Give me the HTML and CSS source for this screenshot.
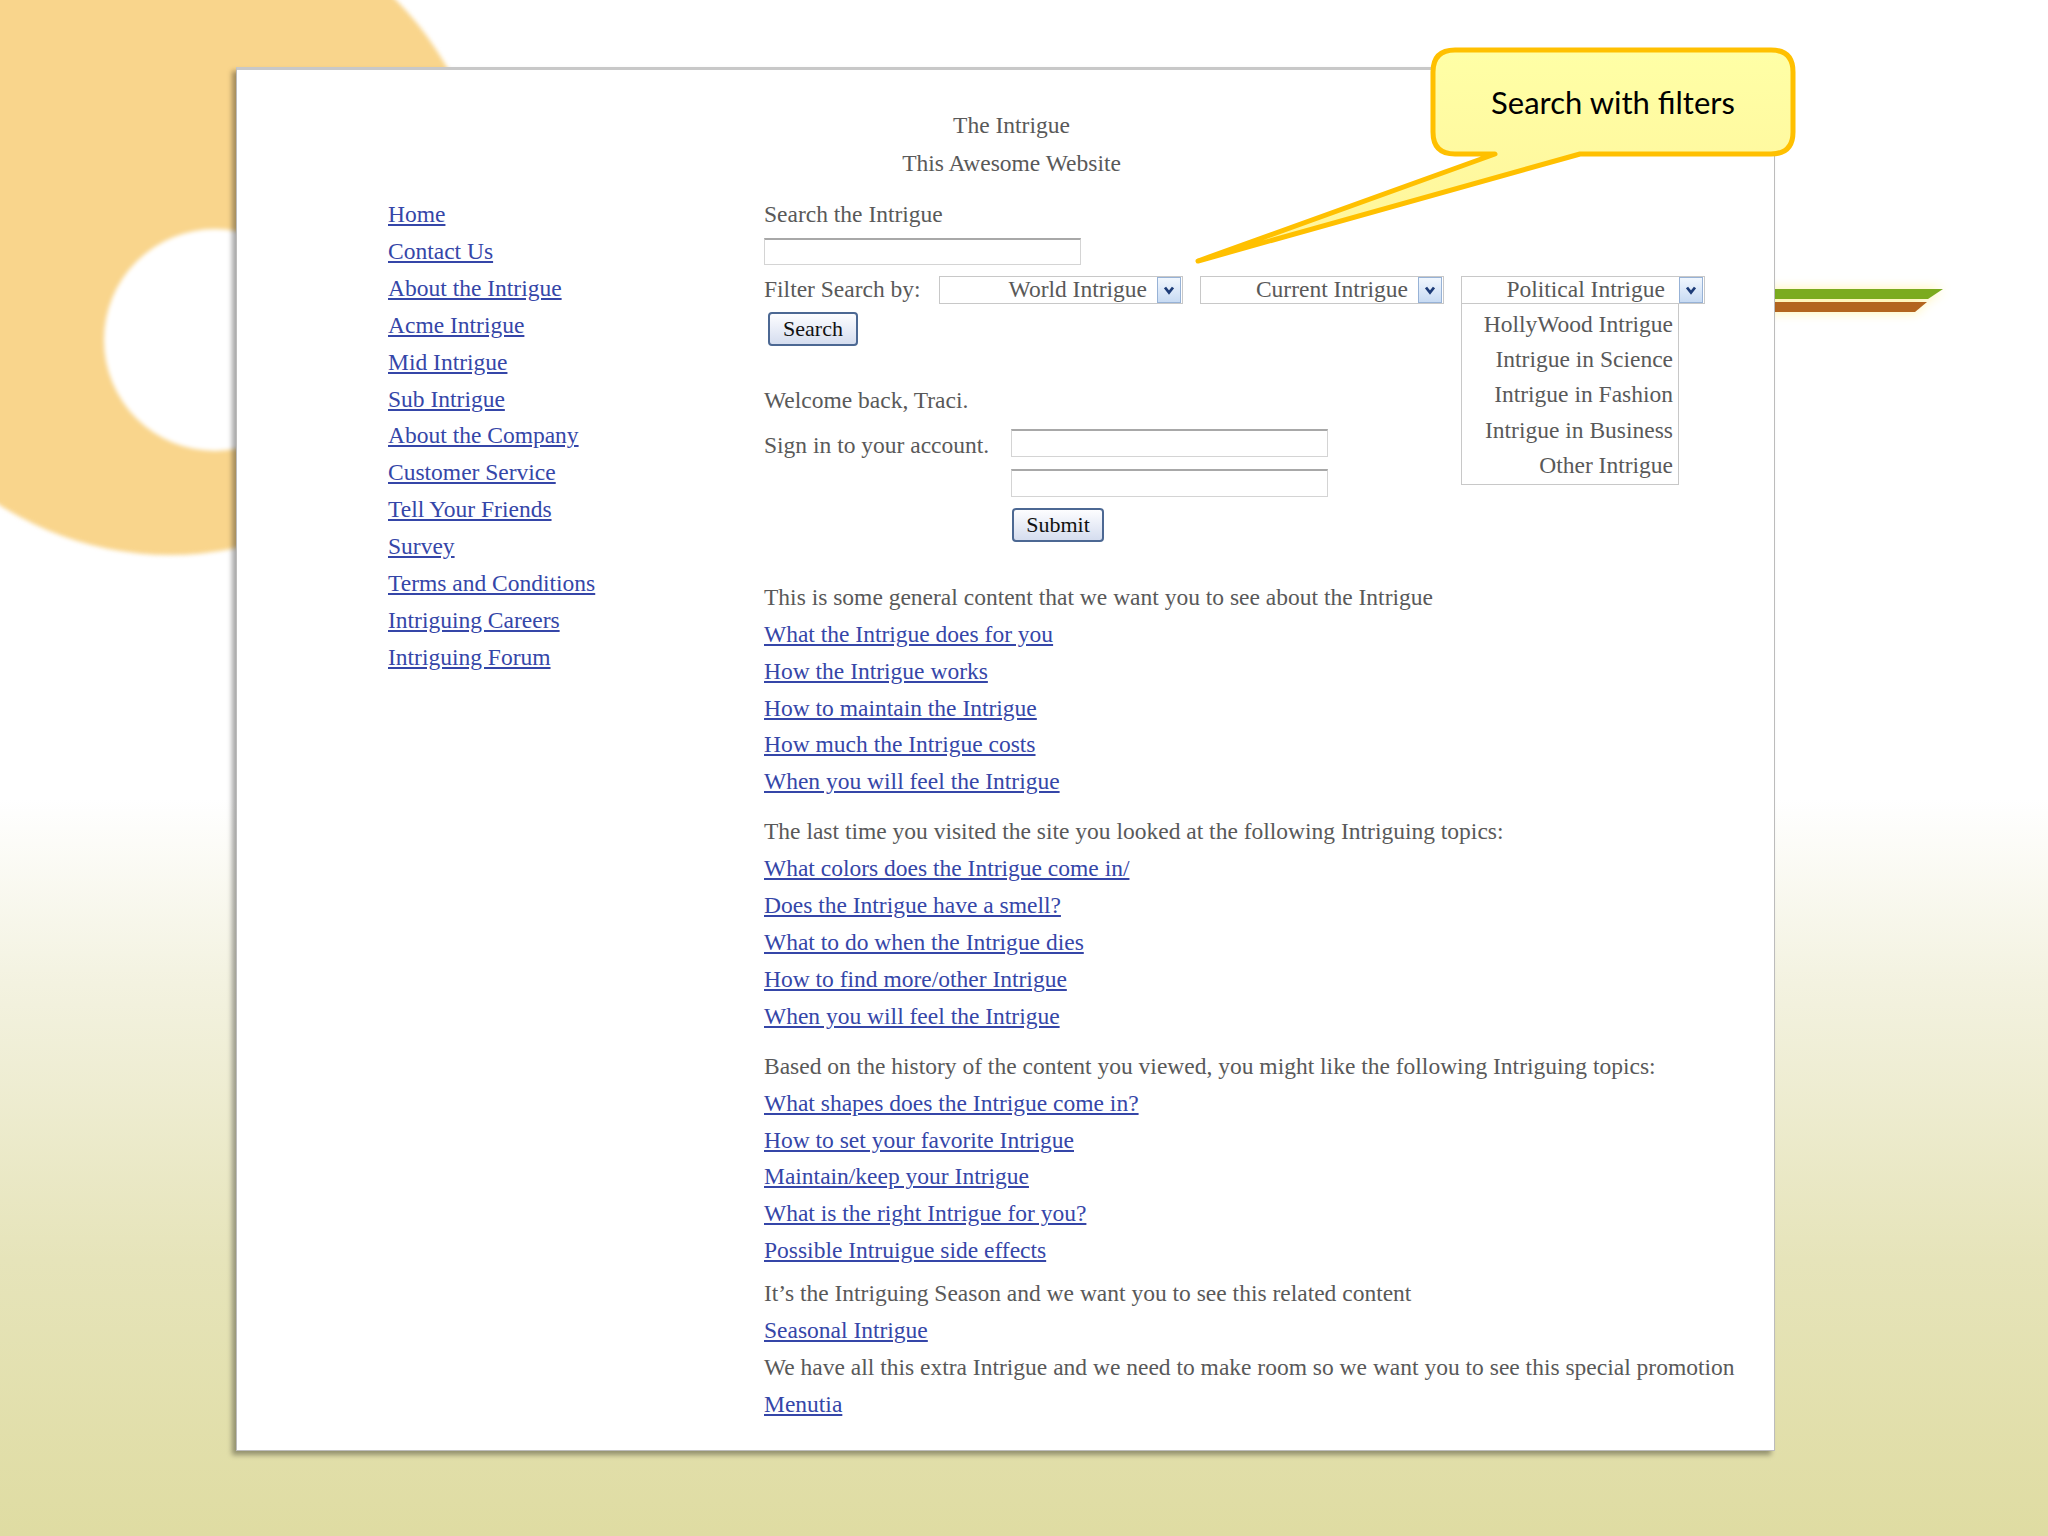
FILE: index.html
```html
<!doctype html>
<html>
<head>
<meta charset="utf-8">
<title>The Intrigue</title>
<link rel="stylesheet" href="styles.css">
</head>
<body>
<div class="slide">
	<div class="ring"></div>
	<div class="stripes">
		<div class="stripe-green"></div>
		<div class="stripe-brown"></div>
	</div>

	<div class="page">
		<div class="masthead">
			<p>The Intrigue</p>
			<p>This Awesome Website</p>
		</div>

		<div class="cols">
			<ul class="nav">
				<li><a href="#">Home</a></li>
				<li><a href="#">Contact Us</a></li>
				<li><a href="#">About the Intrigue</a></li>
				<li><a href="#">Acme Intrigue</a></li>
				<li><a href="#">Mid Intrigue</a></li>
				<li><a href="#">Sub Intrigue</a></li>
				<li><a href="#">About the Company</a></li>
				<li><a href="#">Customer Service</a></li>
				<li><a href="#">Tell Your Friends</a></li>
				<li><a href="#">Survey</a></li>
				<li><a href="#">Terms and Conditions</a></li>
				<li><a href="#">Intriguing Careers</a></li>
				<li><a href="#">Intriguing Forum</a></li>
			</ul>

			<div class="main">
				<p>Search the Intrigue</p>
				<input class="field search-field" type="text">

				<div class="filters">
					<span class="filters-label">Filter Search by:</span>
					<div class="select">
						<span>World Intrigue</span>
						<i class="arrow"><svg width="12" height="10" viewBox="0 0 12 10"><polyline points="2,2.5 6,7.5 10,2.5" fill="none" stroke="#1d3c78" stroke-width="2.8"/></svg></i>
					</div>
					<div class="select">
						<span>Current Intrigue</span>
						<i class="arrow"><svg width="12" height="10" viewBox="0 0 12 10"><polyline points="2,2.5 6,7.5 10,2.5" fill="none" stroke="#1d3c78" stroke-width="2.8"/></svg></i>
					</div>
					<div class="select open">
						<span>Political Intrigue</span>
						<i class="arrow"><svg width="12" height="10" viewBox="0 0 12 10"><polyline points="2,2.5 6,7.5 10,2.5" fill="none" stroke="#1d3c78" stroke-width="2.8"/></svg></i>
						<ul class="dropdown">
							<li>HollyWood Intrigue</li>
							<li>Intrigue in Science</li>
							<li>Intrigue in Fashion</li>
							<li>Intrigue in Business</li>
							<li>Other Intrigue</li>
						</ul>
					</div>
				</div>
				<button class="btn btn-search">Search</button>

				<p class="welcome">Welcome back, Traci.</p>
				<div class="signin">
					<span class="signin-label">Sign in to your account.</span>
					<div class="signin-fields">
						<input class="field" type="text">
						<input class="field" type="password">
						<button class="btn btn-submit">Submit</button>
					</div>
				</div>

				<p class="lead">This is some general content that we want you to see about the Intrigue</p>
				<ul class="links">
					<li><a href="#">What the Intrigue does for you</a></li>
					<li><a href="#">How the Intrigue works</a></li>
					<li><a href="#">How to maintain the Intrigue</a></li>
					<li><a href="#">How much the Intrigue costs</a></li>
					<li><a href="#">When you will feel the Intrigue</a></li>
				</ul>

				<p class="topic-head">The last time you visited the site you looked at the following Intriguing topics:</p>
				<ul class="links">
					<li><a href="#">What colors does the Intrigue come in/</a></li>
					<li><a href="#">Does the Intrigue have a smell?</a></li>
					<li><a href="#">What to do when the Intrigue dies</a></li>
					<li><a href="#">How to find more/other Intrigue</a></li>
					<li><a href="#">When you will feel the Intrigue</a></li>
				</ul>

				<p class="topic-head">Based on the history of the content you viewed, you might like the following Intriguing topics:</p>
				<ul class="links">
					<li><a href="#">What shapes does the Intrigue come in?</a></li>
					<li><a href="#">How to set your favorite Intrigue</a></li>
					<li><a href="#">Maintain/keep your Intrigue</a></li>
					<li><a href="#">What is the right Intrigue for you?</a></li>
					<li><a href="#">Possible Intruigue side effects</a></li>
				</ul>

				<p class="season">It’s the Intriguing Season and we want you to see this related content</p>
				<ul class="links">
					<li><a href="#">Seasonal Intrigue</a></li>
				</ul>
				<p>We have all this extra Intrigue and we need to make room so we want you to see this special promotion</p>
				<ul class="links">
					<li><a href="#">Menutia</a></li>
				</ul>
			</div>
		</div>
	</div>

	<div class="callout">
		<svg width="630" height="240" viewBox="0 0 630 240">
			<defs>
				<linearGradient id="bubble" x1="0" y1="0" x2="0" y2="1">
					<stop offset="0" stop-color="#ffffa6"/>
					<stop offset="1" stop-color="#fff49a"/>
				</linearGradient>
			</defs>
			<path d="M275 10 H591 Q613 10 613 32 V92 Q613 114 591 114 H400 L18 221 L315 114 H275 Q253 114 253 92 V32 Q253 10 275 10 Z" fill="url(#bubble)" stroke="#ffc000" stroke-width="5" stroke-linejoin="round"/>
		</svg>
		<span class="callout-text">Search with filters</span>
	</div>
</div>
</body>
</html>
```

FILE: styles.css
```css
body { margin:0; }
p, ul { margin:0; padding:0; }
li { list-style:none; }

.slide { position:relative; width:2048px; height:1536px; overflow:hidden; box-sizing:border-box; padding:67px 0 0 236px;
	background:linear-gradient(#fff 0, #fff 52%, #f3f2e0 64%, #e6e4ba 82%, #dfdca2 100%);
	font-family:"Liberation Serif", "Times New Roman", serif; }

/* slide decoration */
.ring { position:absolute; left:-150px; top:-95px; width:640px; height:650px; border-radius:50%; background:#f9d58c; filter:blur(2px); }
.ring::after { content:""; position:absolute; left:254px; top:324px; width:222px; height:222px; border-radius:50%; background:#fff; }
.stripes { position:absolute; left:1700px; top:289px; width:243px; filter:drop-shadow(0 0 6px #fff3a8); }
.stripe-green { height:10px; background:#7bab1f; clip-path:polygon(0 0, 100% 0, calc(100% - 15px) 100%, 0 100%); }
.stripe-brown { width:calc(100% - 16px); height:10px; margin-top:3px; background:#b3651f; clip-path:polygon(0 0, 100% 0, calc(100% - 12px) 100%, 0 100%); }

/* the page screenshot */
.page { position:relative; width:1539px; height:1384px; box-sizing:border-box; background:#fff; border:1px solid #bcbcbc; border-top:3px solid #c8c8c8;
	box-shadow:-4px 4px 5px rgba(0,0,0,.35); color:#595959; font-size:23.5px; }
a { color:#3546a8; }

.masthead { padding:36px 0 0 12px; text-align:center; line-height:38px; }

.cols { display:grid; grid-template-columns:376px 1fr; margin-top:14px; padding-left:151px; }
.nav { line-height:36.9px; }

.main p, .links { line-height:36.9px; white-space:nowrap; }

.field { display:block; width:317px; height:27px; box-sizing:border-box; margin:5px 0 0; padding:0; border:1px solid #d4d4d4; border-top:2px solid #a8a8a8; background:#fff; }

.filters { display:flex; align-items:center; height:28px; margin-top:11px; }
.filters-label { width:175px; }
.select { position:relative; display:flex; align-items:center; justify-content:flex-end; width:244px; height:28px; box-sizing:border-box; margin-right:17px; border:1px solid #c8c8c8; }
.select span { padding-right:10px; }
.arrow { display:flex; align-items:center; justify-content:center; width:22px; height:24px; margin-right:1px; border:1px solid #97b2d6; background:linear-gradient(#f1f7fe, #c8dbf3); }
.select.open { margin-right:0; }
.select.open span { padding-right:14px; }
.dropdown { position:absolute; left:-1px; top:27px; width:218px; height:181px; box-sizing:border-box; padding:3px 5px 0 0; border:1px solid #c8c8c8; border-top:none; background:#fff; text-align:right; line-height:35.2px; }

.btn { display:block; padding:0; border:2px solid #4c6893; border-radius:4px; background:linear-gradient(#fdfdff, #d5ddef);
	font-family:"Liberation Serif", "Times New Roman", serif; font-size:22px; color:#111; }
.btn-search { width:90px; height:34px; margin:8px 0 0 4px; }
.btn-submit { width:92px; height:34px; margin:11px 0 0 1px; }

.main .welcome { margin-top:36px; }
.signin { display:flex; margin-top:10px; }
.signin-label { width:247px; padding-top:2px; line-height:28px; }
.signin-fields .field { height:28px; margin:0 0 12px; }
.signin-fields .field + .field { margin-bottom:0; }

.main .lead { margin-top:37px; }
.main .topic-head { margin-top:13px; }
.main .season { margin-top:6px; }

/* callout bubble laid over the slide */
.callout { position:absolute; left:1180px; top:40px; width:630px; height:240px; }
.callout svg { display:block; }
.callout-text { position:absolute; left:253px; top:10px; width:360px; height:104px; display:flex; align-items:center; justify-content:center;
	font-family:Lato, "Open Sans", sans-serif; font-size:31px; color:#000; }
```
